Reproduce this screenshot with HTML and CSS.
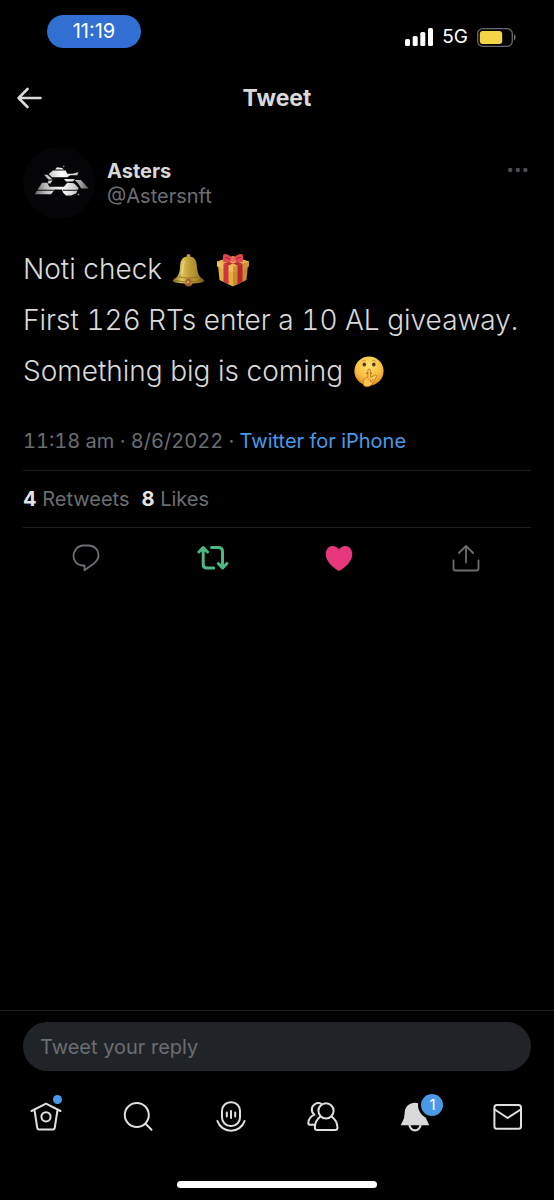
FILE: index.html
```html
<!DOCTYPE html>
<html lang="en">
<head>
<meta charset="utf-8">
<meta name="viewport" content="width=device-width, initial-scale=1">
<title>Tweet</title>
<link rel="stylesheet" href="styles.css">
</head>
<body>
<div class="screen">
  <div class="status">
    <span class="status-time">11:19</span>
    <div class="status-right">
      <svg class="signal" viewBox="0 0 28 18" aria-hidden="true"><rect x="0" y="11" width="5" height="7" rx="1.5"/><rect x="7.7" y="8" width="5" height="10" rx="1.5"/><rect x="15.3" y="4" width="5" height="14" rx="1.5"/><rect x="23" y="0" width="5" height="18" rx="1.5"/></svg>
      <span>5G</span>
      <svg class="battery" viewBox="0 0 39 19" aria-hidden="true"><rect x=".7" y=".7" width="34.6" height="17.6" rx="5" fill="none" stroke="#6b6b6d" stroke-width="1.3"/><rect x="2.8" y="2.9" width="22.4" height="13.2" rx="3" fill="#f5d548"/><path d="M37 6.5c2 1 2 5 0 6z" fill="#7a7a7c"/></svg>
    </div>
  </div>

  <header class="topbar">
    <button class="icon-button back" aria-label="Back"><svg viewBox="0 0 26 22" aria-hidden="true"><path d="M23.500 11H1.800M10.500 2L1.600 11L10.500 20"/></svg></button>
    <h1>Tweet</h1>
  </header>

  <main class="tweet">
    <div class="author">
      <svg class="avatar" viewBox="0 0 72 72" role="img" aria-label="Asters avatar">
        <defs>
          <linearGradient id="metal" gradientUnits="userSpaceOnUse" x1="12" y1="0" x2="66" y2="0"><stop offset="0" stop-color="#666"/><stop offset=".2" stop-color="#bbb"/><stop offset=".5" stop-color="#fff"/><stop offset=".75" stop-color="#ccc"/><stop offset="1" stop-color="#555"/></linearGradient>
        </defs>
        <circle cx="36" cy="36" r="36" fill="#050507"/>
        <g fill="url(#metal)">
          <path d="M32 22.500l2-2.200 5 .7 2 1.500z"/>
          <path d="M25.700 27l4.300-3.500h12.700l1.600 3.200h5l6.400-1.700-1.400 3.300h-7l-3 2H29z"/>
          <path d="M21 27.700h3.500l5 4.800h-4z"/>
          <path d="M25.500 33.500h4l-2 3h-3z"/>
          <path d="M11.700 47.300l7.300-11.600h5.300l2 4H41l3.300-4 6.700.6 4.700 4.700-2.400 5.300L48 48.500h-5L40 45.500 39 42.500h-7l-4 4.800z"/>
          <path d="M41 32h11l-2 2.500h-7z"/>
          <path d="M51.700 33H58l7.700 8.500h-7.400L55 36.300z"/>
        </g>
        <path d="M12 43.300h21M40 43.300h15" stroke="#0b0b0d" stroke-width="1.100"/>
        <circle cx="40.700" cy="19.300" r=".9" fill="#777"/><circle cx="55.500" cy="47.500" r=".9" fill="#888"/>
      </svg>
      <div class="names">
        <strong>Asters</strong>
        <span>@Astersnft</span>
      </div>
      <button class="icon-button more" aria-label="More"><svg viewBox="0 0 20 6" aria-hidden="true"><circle cx="2.200" cy="3" r="2.200"/><circle cx="9.800" cy="3" r="2.200"/><circle cx="17.400" cy="3" r="2.200"/></svg></button>
    </div>

    <div class="tweet-text">
      <p>Noti check
        <svg class="emoji" viewBox="0 0 34 34" role="img" aria-label="bell">
          <defs><linearGradient id="gold" x1="0" x2="1"><stop offset="0" stop-color="#7f681d"/><stop offset=".28" stop-color="#dcc45c"/><stop offset=".5" stop-color="#c4a23a"/><stop offset=".78" stop-color="#a8872a"/><stop offset="1" stop-color="#6e5414"/></linearGradient></defs>
          <circle cx="16.500" cy="3" r="2" fill="#b49b4c"/>
          <circle cx="16.500" cy="29.500" r="4" fill="#9c5d2c"/>
          <path d="M16.500 3.500C9.500 3.500 8.300 8.500 8 14c-.3 6-1.500 9.500-6.500 12.500-1.300 1.200-.5 2.500 2 3 7 1.300 19 1.300 26 0 2.500-.5 3.300-1.800 2-3C26.500 23.500 25.500 20 25 14c-.4-5.500-1.500-10.500-8.500-10.500z" fill="url(#gold)"/>
          <path d="M6.500 23.500c6 2 14 2 20 0M3.500 27.500c8 2 18 2 26 0" fill="none" stroke="#82691f" stroke-width=".8"/>
          <path d="M13.500 28.500a3 3 0 0 1 6 0c0 3-6 3-6 0z" fill="#a8662e"/><circle cx="16" cy="29" r="1.200" fill="#dc9a72"/>
          <path d="M12.500 8c-1.500 3-1.500 8-2.500 13" stroke="#f4e391" stroke-width="1.500" fill="none" opacity=".6"/>
        </svg>
        <svg class="emoji" viewBox="0 0 34 34" role="img" aria-label="gift">
          <path d="M2 12l15 6v15.500L3.500 27z" fill="#e5ae45"/>
          <path d="M32 12l-15 6v15.500L30.500 27z" fill="#c98b2b"/>
          <path d="M17 3L1 8.500v4.800L17 19l16-5.700V8.500z" fill="#e8b450"/>
          <path d="M1 8.500v4.800L17 19v-5z" fill="#efbf5b"/><path d="M33 8.500v4.800L17 19v-5z" fill="#cf9434"/>
          <path d="M7.500 10.800l5 1.700v18.800l-5-2.500z" fill="#cf3440"/><path d="M26.500 10.800l-5 1.700v18.800l5-2.500z" fill="#b92633"/>
          <path d="M7.500 10.800L22 5l4 1.500L12.500 12.600zM26.500 10.800L12 5 8 6.500l13.500 6.100z" fill="#bf2c37"/>
          <path d="M17 6C14 1.500 9 0 7.500 1.500 6.500 3 6.800 7 7.500 9c3 .7 7-.3 9.500-2.500C19.500 8.700 23.500 9.700 26.500 9c.7-2 1-6 0-7.500C25 0 20 1.500 17 6z" fill="#e04851"/>
          <path d="M9 4.500c2 0 4 .8 6 2.200M25 4.500c-2 0-4 .8-6 2.200" stroke="#a51e31" fill="none"/><rect x="14.500" y="4" width="5" height="5" rx="2" fill="#ee6365"/>
        </svg>
      </p>
      <p>First 126 RTs enter a 10 AL giveaway.</p>
      <p>Something big is coming
        <svg class="emoji" viewBox="0 0 34 34" role="img" aria-label="shushing face">
          <defs><radialGradient id="face" cx=".5" cy=".3" r=".75"><stop offset="0" stop-color="#ffe16b"/><stop offset=".6" stop-color="#f9bd41"/><stop offset="1" stop-color="#dd7d1e"/></radialGradient></defs>
          <circle cx="16" cy="16" r="14.600" fill="url(#face)"/>
          <ellipse cx="11.300" cy="9.500" rx="1.800" ry="1.900" fill="#60340c"/><ellipse cx="20.800" cy="9.500" rx="1.800" ry="1.900" fill="#60340c"/>
          <path d="M9 6.500c1-.9 2.500-1.300 3.800-1M23 6.500c-1-.9-2.500-1.300-3.800-1" stroke="#c98228" stroke-width=".8" fill="none"/>
          <path d="M13.200 18.500c1.500-.8 4-.8 5.500 0" stroke="#8c4615" stroke-width="1.200" fill="none"/>
          <path d="M14.800 15.500c0-1.900 2.800-1.900 2.800 0v7l4-2.300c1.900-.8 2.700.7 1.700 2l-4.300 7c-1.700 2.900-7.500 3.300-8.500.8-.8-2.500-.2-7.500 4.300-7.700z" fill="#fbc552" stroke="#c0701d" stroke-width=".8"/>
          <path d="M14.500 24.500c3-.8 3.700.7 2.500 2.500M20 24l-2 3.500" stroke="#b9691c" stroke-width=".8" fill="none"/>
        </svg>
      </p>
    </div>

    <div class="meta"><span>11:18 am · 8/6/2022 · </span><a href="#">Twitter for iPhone</a></div>
    <div class="stats"><span><b>4</b> Retweets</span><span><b>8</b> Likes</span></div>
    <div class="actions">
      <button class="icon-button" aria-label="Reply"><svg viewBox="0 0 32 32" class="line muted" aria-hidden="true"><path d="M14.500 23.500H13C7.500 23.500 3.500 19 3.500 14S7.500 3.500 13 3.500h5.500C24.500 3.500 28.500 8 28.500 13c0 4-2.200 6.700-5 8.800L14.500 28.200z"/></svg></button>
      <button class="icon-button" aria-label="Undo retweet"><svg viewBox="0 0 32 32" class="line retweeted" aria-hidden="true"><path d="M1.900 10L6.200 5.500 10.500 10M6.200 6v16.500q0 3.500 3.500 3.500h7M14.500 5.500h7q4 0 4 4V26M21.300 21.500L25.600 26 29.900 21.500"/></svg></button>
      <button class="icon-button" aria-label="Unlike"><svg viewBox="0 0 32 32" aria-hidden="true"><path fill="#e7387e" d="M16 29C11.500 27 2.700 19.500 2.700 12.200 2.700 7.500 5.800 4 9.700 4c2.600 0 4.900 1.300 6.300 3.500C17.400 5.300 19.700 4 22.300 4c3.900 0 7 3.500 7 8.200C29.300 19.500 20.500 27 16 29z"/></svg></button>
      <button class="icon-button" aria-label="Share"><svg viewBox="0 0 32 32" class="line muted" aria-hidden="true"><path d="M16 20.500V4M8.900 11L16 3.900 23.100 11M3.500 18.500v8q0 2 2 2h21q2 0 2-2v-8"/></svg></button>
    </div>
  </main>

  <footer class="bottom">
    <form class="reply"><input type="text" aria-label="Tweet your reply" placeholder="Tweet your reply"></form>
    <nav class="tabs" aria-label="Main">
      <button class="icon-button" aria-label="Home"><svg viewBox="0 0 32 32" class="line" aria-hidden="true"><path d="M1.500 10L16 2.700 30.500 10M4.500 9l2.700 17.500q.2 2 2 2h13.600q1.800 0 2-2L27.500 9"/><circle cx="16" cy="15.800" r="4.600"/></svg><span class="dot"></span></button>
      <button class="icon-button" aria-label="Search"><svg viewBox="0 0 32 32" class="line" aria-hidden="true"><circle cx="14.800" cy="14" r="12"/><path d="M23.500 22.800l6 6"/></svg></button>
      <button class="icon-button" aria-label="Spaces"><svg viewBox="0 0 32 32" class="line" aria-hidden="true"><rect x="7" y="1.300" width="18" height="23.700" rx="8.500"/><path d="M2.400 20c2 6 7.600 9.800 13.600 9.800S27.600 26 29.600 20M11.800 11.500v4M16 10v7M20.200 11.500v4"/></svg></button>
      <button class="icon-button" aria-label="Communities"><svg viewBox="0 0 32 32" class="line" aria-hidden="true"><circle cx="19" cy="9.800" r="7.600"/><path d="M13.500 15.500C10 18 8 21.500 7.800 26.500q0 2.500 2.500 2.500h17.700q2.500 0 2.500-2.500C30.300 21.500 28 18 24.500 15.500"/><path d="M14 2.600C9.500.9 4.800 4 4.800 8.500c0 2.200 1 4 2.600 5.200C3.500 15.500 1.500 18.500 1.300 22q0 1.800 1.700 1.800h4.500"/></svg></button>
      <button class="icon-button" aria-label="Notifications, 1 new"><svg viewBox="0 0 32 32" aria-hidden="true"><circle cx="16" cy="24" r="5.400" fill="none" stroke="#d9d9d9" stroke-width="2.200"/><path fill="#d9d9d9" d="M16 1.700C10.500 1.700 6.300 5.200 5.800 10.500L5 17.300 1.700 24.300H30.300L27 17.300 26.200 10.500C25.700 5.200 21.500 1.700 16 1.700z"/></svg><span class="badge">1</span></button>
      <button class="icon-button" aria-label="Messages"><svg viewBox="0 0 32 32" class="line" aria-hidden="true"><rect x="2.400" y="4" width="26.600" height="23.800" rx="2.500"/><path d="M2.700 8.500L15.700 17l13-8.500"/></svg></button>
    </nav>
    <div class="home-indicator"></div>
  </footer>
</div>
</body>
</html>
```
FILE: styles.css
```css
* { box-sizing: border-box; }
body { margin: 0; background: #000; color: #d9d9d9; font-family: Inter, "Liberation Sans", sans-serif; }
.screen { display: flex; flex-direction: column; min-height: 100vh; }
svg { display: block; }
.icon-button { display: block; position: relative; padding: 0; border: 0; background: none; color: inherit; font: inherit; }

.status { display: flex; justify-content: space-between; align-items: flex-start; padding: 15px 38px 0 47px; height: 66px; color: #fff; }
.status-time { width: 94px; border-radius: 17px; background: #316fd2; text-align: center; font: 20px/33px Inter, sans-serif; }
.status-right { display: flex; align-items: center; gap: 9px; padding-top: 9px; font-size: 19px; line-height: 26px; }
.signal { width: 28px; height: 18px; fill: #fff; }
.battery { width: 39px; height: 19px; }

.topbar { display: grid; grid-template-columns: 1fr auto 1fr; align-items: center; height: 64px; padding: 0 17px; }
.topbar h1 { margin: 0; font-size: 23px; line-height: 32px; font-weight: 700; }
.back svg { width: 26px; height: 22px; fill: none; stroke: #d9d9d9; stroke-width: 2.6; stroke-linecap: round; stroke-linejoin: round; }

.tweet { flex: 1; padding: 17px 23px 0; }
.author { display: flex; gap: 12px; }
.avatar { width: 72px; height: 72px; }
.names { flex: 1; display: flex; flex-direction: column; padding-top: 12px; font-size: 20px; line-height: 25px; }
.names strong { font-weight: 700; }
.names span { color: #6b6e72; }
.more { align-self: flex-start; padding: 20px 3px; }
.more svg { width: 20px; height: 6px; fill: #4b4e52; }

.tweet-text { padding-top: 25px; font-size: 28px; line-height: 51px; font-weight: 300; font-variant-numeric: tabular-nums; }
.tweet-text p { display: flex; align-items: center; gap: 10px; margin: 0; white-space: nowrap; }
.emoji { width: 34px; height: 34px; }
.meta { padding: 28px 0 13px; border-bottom: 1px solid #1c1e20; color: #6b6e72; font-size: 20px; line-height: 32px; font-variant-numeric: tabular-nums; white-space: pre; }
.meta a { color: #4a99e9; text-decoration: none; }
.stats { display: flex; gap: 12px; padding: 12px 0; border-bottom: 1px solid #1c1e20; color: #6b6e72; font-size: 20px; line-height: 32px; }
.stats b { color: #e4e4e4; }
.actions { display: grid; grid-template-columns: repeat(4, 1fr); justify-items: center; padding: 14px 2px 0 0; }
.actions svg, .tabs svg { width: 32px; height: 32px; }
.line { fill: none; stroke: #e0e0e0; stroke-width: 2; stroke-linecap: round; stroke-linejoin: round; }
.muted { stroke: #6b6e72; stroke-width: 1.8; }
.retweeted { stroke: #4fb783; stroke-width: 3; }

.bottom { border-top: 1px solid #1c1e20; }
.reply { padding: 11px 23px 0; }
.reply input { display: block; width: 100%; height: 49px; padding: 0 17px; border: 0; border-radius: 25px; background: #202327; color: #d9d9d9; font: 20px/32px Inter, sans-serif; }
.reply input::placeholder { color: #6b6e72; opacity: 1; }
.tabs { display: grid; grid-template-columns: repeat(6, 1fr); justify-items: center; padding-top: 30px; }
.dot { position: absolute; top: -6px; right: 0; width: 9px; height: 9px; border-radius: 50%; background: #4a99e9; }
.badge { position: absolute; top: -10px; right: -15px; width: 28px; height: 28px; border: 3px solid #000; border-radius: 50%; background: #4a99e9; color: #fff; font-size: 15px; line-height: 22px; text-align: center; }
.home-indicator { width: 36%; height: 7px; margin: 48px auto 12px; border-radius: 4px; background: #fff; }
```
